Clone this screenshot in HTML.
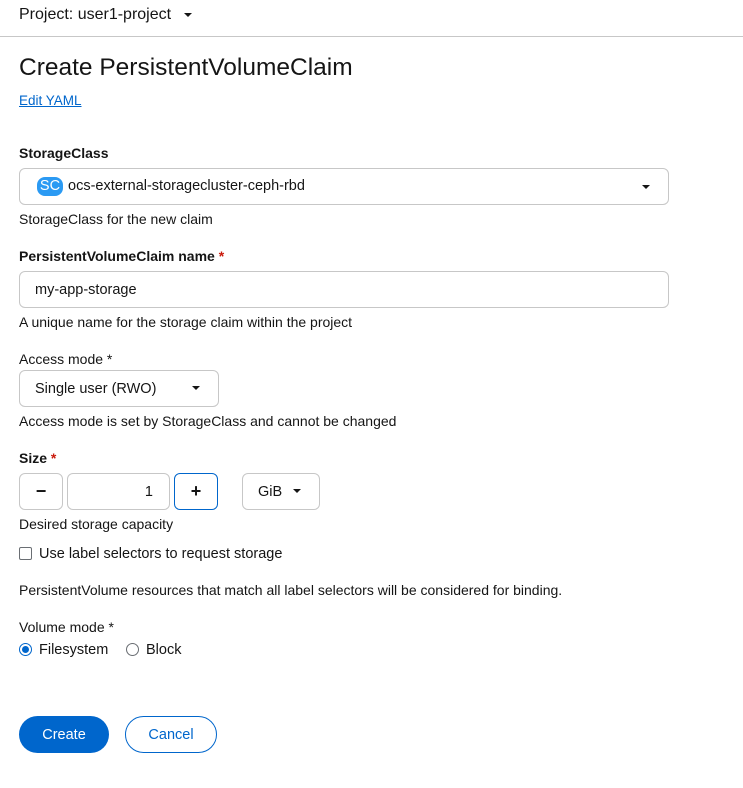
<!DOCTYPE html>
<html><head><meta charset="utf-8"><style>
*{box-sizing:border-box;margin:0;padding:0}
body{width:743px;height:788px;background:#fff;font-family:"Liberation Sans",sans-serif;color:#151515;font-size:14px;position:relative;overflow:hidden}
.a{position:absolute}
.box{position:absolute;border:1px solid #c7c7c7;border-radius:6px;background:#fff}
.caret{display:inline-block;width:0;height:0;border-left:4.5px solid transparent;border-right:4.5px solid transparent;border-top:4.5px solid #151515}
.req{color:#c9190b}
</style></head><body>
<div class="a" style="left:19px;top:6px;font-size:16px">Project: user1-project <span class="caret" style="margin-left:8px;vertical-align:middle"></span></div>
<div class="a" style="left:0;top:36px;width:743px;border-top:1px solid #c7c7c7"></div>
<div class="a" style="left:19px;top:54px;font-size:24.5px">Create PersistentVolumeClaim</div>
<div class="a" style="left:19px;top:93px;font-size:13.5px;color:#0066cc;text-decoration:underline">Edit YAML</div>

<div class="a" style="left:19px;top:145px;font-weight:700">StorageClass</div>
<div class="box" style="left:19px;top:168px;width:650px;height:37px"></div>
<div class="a" style="left:37px;top:177px;width:26px;height:19px;border-radius:8px;background:#2b9af3;color:#fff;font-size:14.5px;text-align:center;line-height:19px">SC</div>
<div class="a" style="left:68px;top:178px;font-size:14.5px">ocs-external-storagecluster-ceph-rbd</div>
<span class="caret a" style="left:642px;top:185px"></span>
<div class="a" style="left:19px;top:211px">StorageClass for the new claim</div>

<div class="a" style="left:19px;top:248px;font-weight:700">PersistentVolumeClaim name <span class="req">*</span></div>
<div class="box" style="left:19px;top:271px;width:650px;height:37px"></div>
<div class="a" style="left:35px;top:282px;font-size:14.5px">my-app-storage</div>
<div class="a" style="left:19px;top:314px">A unique name for the storage claim within the project</div>

<div class="a" style="left:19px;top:351px">Access mode *</div>
<div class="box" style="left:19px;top:370px;width:200px;height:37px"></div>
<div class="a" style="left:35px;top:381px;font-size:14.5px">Single user (RWO)</div>
<span class="caret a" style="left:192px;top:386px"></span>
<div class="a" style="left:19px;top:413px">Access mode is set by StorageClass and cannot be changed</div>

<div class="a" style="left:19px;top:450px;font-weight:700">Size <span class="req">*</span></div>
<div class="box" style="left:19px;top:473px;width:44px;height:37px;text-align:center;line-height:34px;font-size:18px;font-weight:700">−</div>
<div class="box" style="left:67px;top:473px;width:103px;height:37px;text-align:right;padding-right:16px;line-height:36px;font-size:14.5px">1</div>
<div class="box" style="left:174px;top:473px;width:44px;height:37px;border-color:#0066cc;text-align:center;line-height:34px;font-size:18px;font-weight:700">+</div>
<div class="box" style="left:242px;top:473px;width:78px;height:37px"></div>
<div class="a" style="left:258px;top:484px;font-size:14.5px">GiB</div>
<span class="caret a" style="left:293px;top:489px"></span>
<div class="a" style="left:19px;top:516px">Desired storage capacity</div>

<div class="a" style="left:19px;top:547px;width:13px;height:13px;border:1px solid #6a6e73;border-radius:2px"></div>
<div class="a" style="left:39px;top:546px;font-size:14.5px">Use label selectors to request storage</div>
<div class="a" style="left:19px;top:582px">PersistentVolume resources that match all label selectors will be considered for binding.</div>

<div class="a" style="left:19px;top:619px">Volume mode *</div>
<div class="a" style="left:19px;top:643px;width:13px;height:13px;border:1px solid #0066cc;border-radius:50%"><div style="margin:2px;width:7px;height:7px;border-radius:50%;background:#0066cc"></div></div>
<div class="a" style="left:39px;top:642px;font-size:14.5px">Filesystem</div>
<div class="a" style="left:126px;top:643px;width:13px;height:13px;border:1px solid #6a6e73;border-radius:50%"></div>
<div class="a" style="left:146px;top:642px;font-size:14.5px">Block</div>

<div class="a" style="left:19px;top:716px;width:90px;height:37px;border-radius:19px;background:#0066cc;color:#fff;text-align:center;line-height:38px;font-size:14.5px">Create</div>
<div class="a" style="left:125px;top:716px;width:92px;height:37px;border-radius:19px;border:1px solid #0066cc;color:#0066cc;text-align:center;line-height:36px;font-size:14.5px">Cancel</div>
</body></html>
